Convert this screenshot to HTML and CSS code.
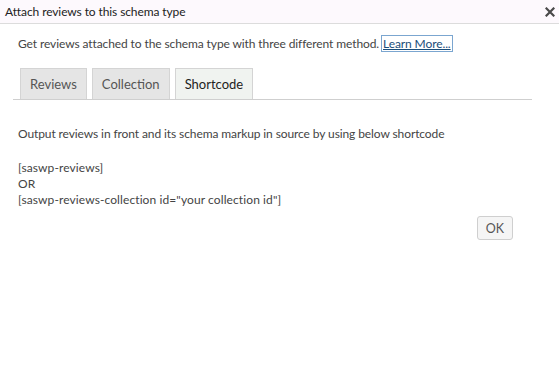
FILE: index.html
```html
<!DOCTYPE html>
<html>
<head>
<meta charset="utf-8">
<link rel="stylesheet" href="styles.css">
</head>
<body>
<div class="dialog">
  <div class="titlebar">
    <span class="title">Attach reviews to this schema type</span>
    <svg class="close" width="10" height="10" viewBox="0 0 10 10"><path d="M1.5 1.5 L8.5 8.5 M8.5 1.5 L1.5 8.5" stroke="#4a4a4a" stroke-width="2.2" stroke-linecap="square"/></svg>
  </div>
  <p class="intro">Get reviews attached to the schema type with three different method. <a class="more" href="#">Learn More...</a></p>
  <div class="tabs">
    <span class="tab">Reviews</span>
    <span class="tab">Collection</span>
    <span class="tab active">Shortcode</span>
  </div>
  <div class="panel">
    <p class="desc">Output reviews in front and its schema markup in source by using below shortcode</p>
    <div class="codes">
      <div>[saswp-reviews]</div>
      <div>OR</div>
      <div>[saswp-reviews-collection id="your collection id"]</div>
    </div>
    <div class="actions"><button class="ok">OK</button></div>
  </div>
</div>
</body>
</html>
```
FILE: styles.css
```css
html, body {
  margin: 0;
  padding: 0;
  background: #fff;
}
body {
  font-family: Lato, "Open Sans", sans-serif;
  font-size: 12px;
  letter-spacing: -0.1px;
  color: #444;
}
.dialog {
  width: 559px;
  height: 390px;
}
.titlebar {
  height: 24px;
  box-sizing: border-box;
  border-bottom: 1px solid #dcdcdc;
  background: #fdf9fd;
  display: flex;
  align-items: center;
  justify-content: space-between;
  padding: 0 4px 0 5px;
}
.title {
  color: #222;
  font-size: 12px;
}
.close {
  display: block;
}
.intro {
  margin: 11px 0 0 18px;
  line-height: 18px;
  color: #444;
}
.more {
  color: #1a4d7a;
  text-decoration: underline;
  outline: 1px solid #7ba6d0;
  outline-offset: 0;
  padding: 0 1px;
}
.tabs {
  display: flex;
  gap: 5px;
  margin: 15px 27px 0 13px;
  padding-left: 7px;
  border-bottom: 1px solid #cfcfcf;
}
.tab {
  height: 31px;
  box-sizing: border-box;
  padding: 0 9px;
  display: flex;
  align-items: center;
  background: #e5e5e5;
  border: 1px solid #d4d4d4;
  border-bottom: none;
  color: #555;
  font-size: 13px;
  letter-spacing: 0;
}
.tab.active {
  background: #f0f3f0;
  color: #222;
}
.panel {
  padding: 0 18px;
}
.desc {
  margin: 26px 0 0 0;
  line-height: 16px;
  color: #444;
}
.codes {
  margin-top: 18px;
  line-height: 16px;
  color: #444;
  letter-spacing: 0.1px;
}
.actions {
  display: flex;
  justify-content: flex-end;
  margin: 8px 28px 0 0;
}
.ok {
  font-family: inherit;
  font-size: 12.5px;
  color: #555;
  background: #f5f5f5;
  border: 1px solid #cfcfcf;
  border-radius: 3px;
  width: 36px;
  height: 24px;
  padding: 0;
}
```
